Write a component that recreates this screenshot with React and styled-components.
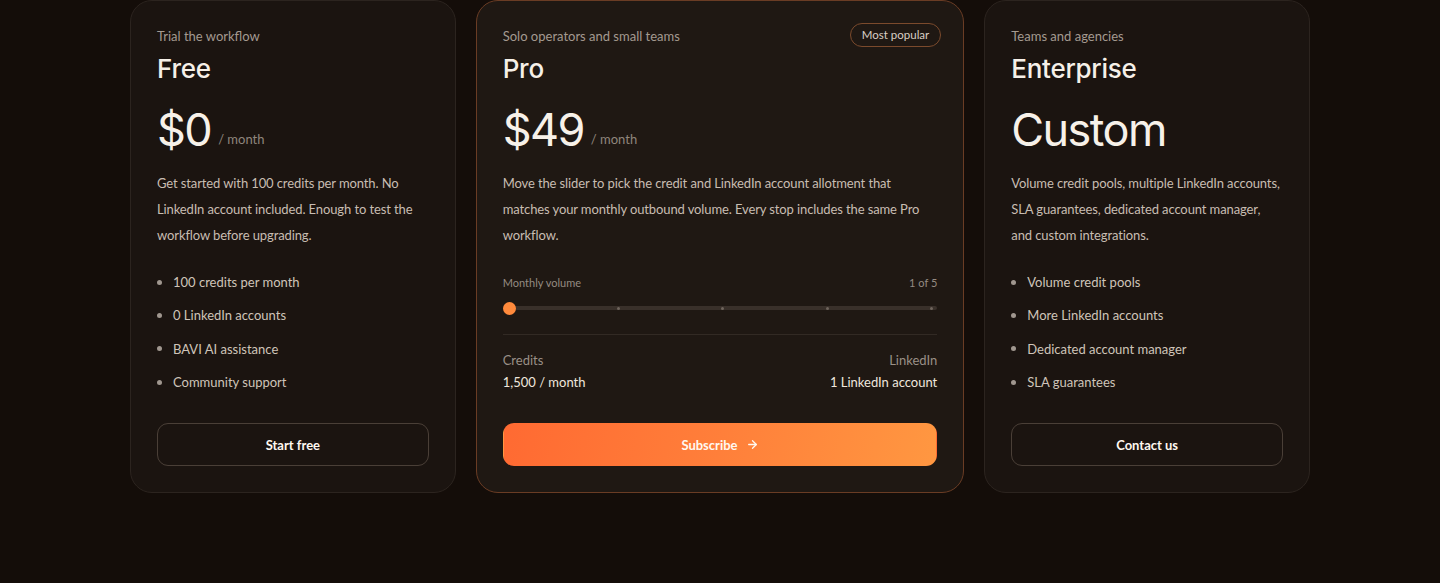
import React from "react";
import styled, { createGlobalStyle } from "styled-components";

const Global = createGlobalStyle`
  html, body { margin: 0; padding: 0; background: #140d09; }
  body { font-family: Lato, "Open Sans", sans-serif; color: #e8e0d6; }
  * { box-sizing: border-box; }
`;

const Page = styled.div`
  min-height: 583px;
  background: #140d09;
  display: flex;
  justify-content: center;
  align-items: flex-start;
`;

const Grid = styled.div`
  width: 1180px;
  display: grid;
  grid-template-columns: 1fr 1.5fr 1fr;
  gap: 20px;
  align-items: stretch;
`;

const Card = styled.div`
  position: relative;
  display: flex;
  flex-direction: column;
  padding: 26px 26px 26px;
  border-radius: 22px;
  border: 1px solid ${(p) => (p.$featured ? "#6a3c24" : "#2c241f")};
  background: ${(p) => (p.$featured ? "#1f1813" : "#1b1410")};
`;

const Eyebrow = styled.div`
  font-size: 13px;
  line-height: 18px;
  color: #a49a90;
`;

const Title = styled.h3`
  margin: 8px 0 0;
  font-family: Inter, Roboto, sans-serif;
  font-weight: 500;
  font-size: 26px;
  line-height: 32px;
  color: #f6f0e8;
  letter-spacing: -0.01em;
`;

const PriceRow = styled.div`
  margin-top: 22px;
  display: flex;
  align-items: flex-end;
  gap: 7px;
  height: 46px;
`;

const Price = styled.span`
  font-family: Inter, Roboto, sans-serif;
  font-weight: 400;
  font-size: 45px;
  line-height: 46px;
  letter-spacing: -0.035em;
  color: #f7f1e9;
`;

const Per = styled.span`
  font-size: 13px;
  line-height: 18px;
  margin-bottom: 5px;
  color: #8f867d;
`;

const Desc = styled.p`
  margin: 17px 0 0;
  font-size: 13px;
  line-height: 26px;
  letter-spacing: -0.11px;
  color: #c8bdb2;
`;

const List = styled.ul`
  list-style: none;
  margin: 24px 0 0;
  padding: 0;
  display: flex;
  flex-direction: column;
  gap: 13.4px;
`;

const Item = styled.li`
  display: flex;
  align-items: center;
  gap: 11px;
  font-size: 13px;
  line-height: 20px;
  color: #cfc4b9;
  &::before {
    content: "";
    width: 5px;
    height: 5px;
    border-radius: 50%;
    background: #a0978f;
  }
`;

const Button = styled.button`
  margin-top: auto;
  height: 43px;
  width: 100%;
  border-radius: 11px;
  font-family: Lato, sans-serif;
  font-weight: 700;
  font-size: 13px;
  color: #fff8f0;
  display: flex;
  align-items: center;
  justify-content: center;
  gap: 8px;
  cursor: pointer;
  border: 1px solid ${(p) => (p.$primary ? "transparent" : "#4a3f37")};
  background: ${(p) =>
    p.$primary ? "linear-gradient(100deg, #ff6a32 0%, #ff7f3a 50%, #ff9741 100%)" : "transparent"};
`;

const Badge = styled.div`
  position: absolute;
  top: 22px;
  right: 22px;
  height: 24px;
  padding: 0 11px;
  border-radius: 999px;
  border: 1px solid #7b4a2c;
  font-size: 11.5px;
  line-height: 22px;
  color: #d9cfc5;
`;

const Volume = styled.div`
  margin-top: 27px;
`;

const VolumeHead = styled.div`
  display: flex;
  justify-content: space-between;
  font-size: 11px;
  line-height: 16px;
  color: #948b82;
`;

const Track = styled.div`
  position: relative;
  margin-top: 10px;
  height: 14px;
  display: flex;
  align-items: center;
  justify-content: space-between;
  &::before {
    content: "";
    position: absolute;
    left: 0;
    right: 0;
    top: 5px;
    height: 4px;
    border-radius: 2px;
    background: #39302a;
  }
`;

const Stop = styled.span`
  position: relative;
  z-index: 1;
  width: ${(p) => (p.$active ? "13px" : "3px")};
  height: ${(p) => (p.$active ? "13px" : "3px")};
  border-radius: 50%;
  background: ${(p) => (p.$active ? "#ff8a3c" : "#6f655d")};
  margin-right: ${(p) => (p.$last ? "4px" : "0")};
`;

const Divider = styled.hr`
  margin: 19px 0 0;
  border: 0;
  height: 1px;
  background: #322a24;
`;

const Stats = styled.div`
  margin-top: 16px;
  display: flex;
  justify-content: space-between;
`;

const Stat = styled.div`
  display: flex;
  flex-direction: column;
  align-items: ${(p) => (p.$right ? "flex-end" : "flex-start")};
  gap: 3px;
`;

const StatLabel = styled.span`
  font-size: 13px;
  line-height: 18px;
  color: #9a9087;
`;

const StatValue = styled.span`
  font-size: 13px;
  line-height: 20px;
  color: #efe7de;
`;

const Spacer = styled.div`
  height: 31px;
`;

const Arrow = () => (
  <svg width="13" height="13" viewBox="0 0 24 24" fill="none" stroke="currentColor" strokeWidth="2.4" strokeLinecap="round" strokeLinejoin="round">
    <path d="M5 12h14" />
    <path d="M12 5l7 7-7 7" />
  </svg>
);

export default function App() {
  return (
    <>
      <Global />
      <Page>
        <Grid>
          <Card>
            <Eyebrow>Trial the workflow</Eyebrow>
            <Title>Free</Title>
            <PriceRow>
              <Price>$0</Price>
              <Per>/ month</Per>
            </PriceRow>
            <Desc>
              Get started with 100 credits per month. No LinkedIn account included. Enough to test the workflow before upgrading.
            </Desc>
            <List>
              <Item>100 credits per month</Item>
              <Item>0 LinkedIn accounts</Item>
              <Item>BAVI AI assistance</Item>
              <Item>Community support</Item>
            </List>
            <Spacer />
            <Button>Start free</Button>
          </Card>

          <Card $featured>
            <Badge>Most popular</Badge>
            <Eyebrow>Solo operators and small teams</Eyebrow>
            <Title>Pro</Title>
            <PriceRow>
              <Price>$49</Price>
              <Per>/ month</Per>
            </PriceRow>
            <Desc>
              Move the slider to pick the credit and LinkedIn account allotment that matches your monthly outbound volume. Every stop includes the same Pro workflow.
            </Desc>
            <Volume>
              <VolumeHead>
                <span>Monthly volume</span>
                <span>1 of 5</span>
              </VolumeHead>
              <Track>
                <Stop $active />
                <Stop />
                <Stop />
                <Stop />
                <Stop $last />
              </Track>
            </Volume>
            <Divider />
            <Stats>
              <Stat>
                <StatLabel>Credits</StatLabel>
                <StatValue>1,500 / month</StatValue>
              </Stat>
              <Stat $right>
                <StatLabel>LinkedIn</StatLabel>
                <StatValue>1 LinkedIn account</StatValue>
              </Stat>
            </Stats>
            <Spacer />
            <Button $primary>
              Subscribe <Arrow />
            </Button>
          </Card>

          <Card>
            <Eyebrow>Teams and agencies</Eyebrow>
            <Title>Enterprise</Title>
            <PriceRow>
              <Price>Custom</Price>
            </PriceRow>
            <Desc>
              Volume credit pools, multiple LinkedIn accounts, SLA guarantees, dedicated account manager, and custom integrations.
            </Desc>
            <List>
              <Item>Volume credit pools</Item>
              <Item>More LinkedIn accounts</Item>
              <Item>Dedicated account manager</Item>
              <Item>SLA guarantees</Item>
            </List>
            <Spacer />
            <Button>Contact us</Button>
          </Card>
        </Grid>
      </Page>
    </>
  );
}
